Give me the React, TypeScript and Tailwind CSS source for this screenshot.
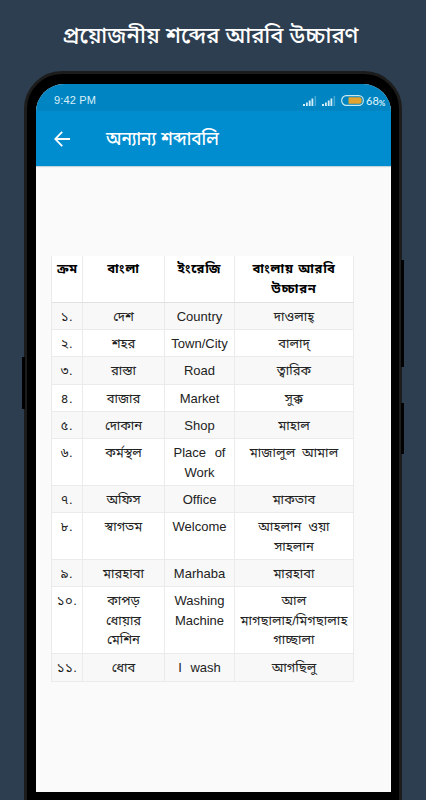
type Row = {
  no: string;
  bangla: string[];
  english: string[];
  arabic: string[];
  height: string;
};

const rows: Row[] = [
  { no: "১.", bangla: ["দেশ"], english: ["Country"], arabic: ["দাওলাহ্"], height: "h-[27px]" },
  { no: "২.", bangla: ["শহর"], english: ["Town/City"], arabic: ["বালাদ্"], height: "h-[27px]" },
  { no: "৩.", bangla: ["রাস্তা"], english: ["Road"], arabic: ["ত্বারিক"], height: "h-[28px]" },
  { no: "৪.", bangla: ["বাজার"], english: ["Market"], arabic: ["সুক্ক"], height: "h-[27px]" },
  { no: "৫.", bangla: ["দোকান"], english: ["Shop"], arabic: ["মাহাল"], height: "h-[27px]" },
  { no: "৬.", bangla: ["কর্মস্থল"], english: ["Place of", "Work"], arabic: ["মাজালুল আমাল"], height: "h-[47px]" },
  { no: "৭.", bangla: ["অফিস"], english: ["Office"], arabic: ["মাকতাব"], height: "h-[27px]" },
  { no: "৮.", bangla: ["স্বাগতম"], english: ["Welcome"], arabic: ["আহলান ওয়া", "সাহলান"], height: "h-[47px]" },
  { no: "৯.", bangla: ["মারহাবা"], english: ["Marhaba"], arabic: ["মারহাবা"], height: "h-[27px]" },
  { no: "১০.", bangla: ["কাপড়", "ধোয়ার", "মেশিন"], english: ["Washing", "Machine"], arabic: ["আল", "মাগছালাহ/মিগছালাহ", "গাচ্ছালা"], height: "h-[67px]" },
  { no: "১১.", bangla: ["ধোব"], english: ["I wash"], arabic: ["আগছিলু"], height: "h-[28px]" },
];

function Cell({ lines, className = "pt-[3px]" }: { lines: string[]; className?: string }) {
  return (
    <div className={`border-r border-[#ebebeb] text-center ${className}`}>
      {lines.map((line) => (
        <div key={line} className="flex h-[19.5px] items-center justify-center whitespace-nowrap">
          {line}
        </div>
      ))}
    </div>
  );
}

function Signal() {
  return (
    <svg width="14" height="10" viewBox="0 0 14 10" fill="#d5edf7">
      <rect x="0" y="8" width="2" height="2" />
      <rect x="3" y="6.5" width="1.8" height="3.5" />
      <rect x="5.8" y="4.5" width="1.8" height="5.5" />
      <rect x="8.5" y="2.5" width="1.8" height="7.5" />
      <rect x="11.6" y="0" width="1.5" height="10" opacity="0.35" />
    </svg>
  );
}

function StatusBar() {
  return (
    <div className="flex h-[27px] shrink-0 items-center bg-[#0084c2] pt-[6px] pl-[18px] text-[#d9f0f8]">
      <span className="mb-px w-[249px] text-[11px] tracking-[0.15px]">9:42 PM</span>
      <Signal />
      <span className="w-[5px]" />
      <Signal />
      <svg className="ml-[5px]" width="23" height="11" viewBox="0 0 23 11" fill="none">
        <rect x="0.7" y="0.7" width="21.6" height="9.6" rx="4.6" stroke="#c8e9ee" strokeWidth="1.2" />
        <path d="M7.5 2.3H18.6a2 2 0 0 1 2 2v2.4a2 2 0 0 1-2 2H7.5Z" fill="#e3a32f" />
      </svg>
      <span className="ml-[2px] font-['Lato','Liberation_Sans',sans-serif] text-[11px] leading-none font-medium whitespace-nowrap">
        68<span className="relative top-px text-[8px] font-bold">%</span>
      </span>
    </div>
  );
}

function AppBar() {
  return (
    <div className="flex h-[55px] shrink-0 items-center bg-[#008dcf] text-white shadow-[0_1px_1px_#c5d3da]">
      <svg className="ml-[17px]" width="18" height="18" viewBox="0 0 18 18" fill="none" stroke="currentColor" strokeWidth="1.8">
        <path d="M9.2 1.8 2.3 9l6.9 7.2M2.3 9H17" />
      </svg>
      <h2 className="mt-px ml-[35px] origin-left scale-x-[0.9] text-[19px] font-medium whitespace-nowrap">অন্যান্য শব্দাবলি</h2>
    </div>
  );
}

function WordTable() {
  const columns = "grid grid-cols-[31px_82px_70px_119px]";
  return (
    <div className="ml-[15px] mt-[90px] w-[303px] border-l border-[#ebebeb] text-[13px] text-[#222]">
      <div className={`${columns} h-[47px] border-b border-[#e0e0e0] bg-white font-bold text-black tracking-[0.8px]`}>
        <Cell lines={["ক্রম"]} className="pt-[3px] tracking-normal" />
        <Cell lines={["বাংলা"]} />
        <Cell lines={["ইংরেজি"]} />
        <Cell lines={["বাংলায় আরবি", "উচ্চারন"]} />
      </div>
      {rows.map((row) => (
        <div key={row.no} className={`${columns} ${row.height} border-b border-[#ebebeb] odd:bg-white even:bg-[#f8f8f8]`}>
          <Cell lines={[row.no]} className="pt-1 tracking-[0.5px]" />
          <Cell lines={row.bangla} className="pt-1" />
          <Cell lines={row.english} className="pt-1 [word-spacing:5px]" />
          <Cell lines={row.arabic} className="pt-1 tracking-[0.1px] [word-spacing:3px]" />
        </div>
      ))}
    </div>
  );
}

export default function App() {
  return (
    <main className="flex h-[800px] w-[426px] flex-col overflow-hidden bg-[#2d3e50] font-['Liberation_Sans','Noto_Sans_Bengali',sans-serif]">
      <h1 className="flex h-[71px] shrink-0 items-center justify-center pr-[5px] text-[22px] font-medium whitespace-nowrap text-white">
        প্রয়োজনীয় শব্দের আরবি উচ্চারণ
      </h1>
      <div className="relative ml-[24px] h-[760px] w-[378px] shrink-0 rounded-t-[38px] border-[3px] border-[#1c1c1c] bg-black pt-[10px] pl-[9px]">
        <div className="flex h-[708px] w-[355px] flex-col overflow-hidden rounded-t-[28px] bg-[#fafafa]">
          <StatusBar />
          <AppBar />
          <WordTable />
        </div>
        {/* Side buttons */}
        <span className="absolute top-[283px] left-[-5px] h-[52px] w-[3px] bg-black" />
        <span className="absolute top-[186px] right-[-5px] h-[107px] w-[3px] bg-black" />
        <span className="absolute top-[329px] right-[-5px] h-[51px] w-[3px] bg-black" />
      </div>
    </main>
  );
}
